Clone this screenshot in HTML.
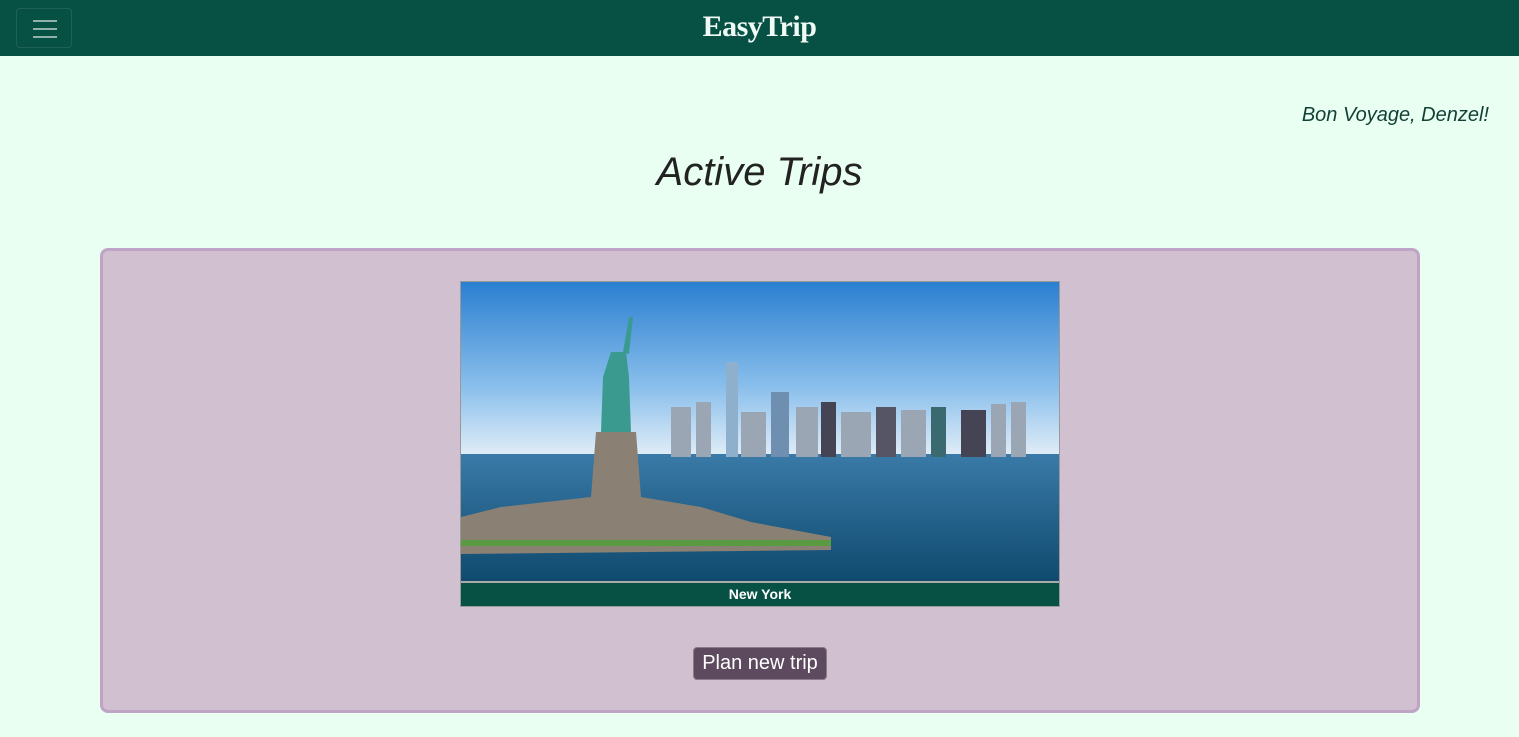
<!DOCTYPE html>
<html><head><meta charset="utf-8"><style>
*{box-sizing:border-box;margin:0;padding:0}
body{width:1519px;height:737px;background:#e8fff2;font-family:"Liberation Sans",sans-serif;position:relative;overflow:hidden}
.nav{position:absolute;left:0;top:0;width:1519px;height:56px;background:#075044}
.tog{position:absolute;left:16px;top:8px;width:56px;height:40px;border:1px solid rgba(255,255,255,.1);border-radius:4px}
.tog i{position:absolute;left:16px;width:24px;height:2px;background:#8fb3ab}
.brand{position:absolute;left:0;width:1519px;top:10px;text-align:center;color:#f0fbf6;font-family:"Liberation Serif",serif;font-weight:bold;font-size:30px;letter-spacing:-0.5px}
.hi{position:absolute;right:30px;top:104px;font-style:italic;font-size:20px;color:#123f36}
h1{position:absolute;left:0;width:1519px;top:150px;text-align:center;font-weight:normal;font-style:italic;font-size:40px;color:#222}
.card{position:absolute;left:100px;top:248px;width:1320px;height:465px;background:#d0c0d0;border:3px solid #c0a4c6;border-radius:8px}
.img{position:absolute;left:357px;top:30px;width:600px;height:326px;border:1px solid #999;background:#fff}
.cap{position:absolute;left:0;bottom:0;width:598px;height:25px;background:#075044;color:#fff;font-weight:bold;font-size:14px;text-align:center;line-height:23px;border-top:2px solid #aaa}
.btn{position:absolute;left:590px;top:396px;width:134px;height:33px;background:#5d4a5e;color:#fff;font-size:20px;text-align:center;line-height:31px;border-radius:4px;border:1px solid #8a7a8a}
</style></head><body>
<div class="nav"><div class="tog"><i style="top:11px"></i><i style="top:19px"></i><i style="top:27px"></i></div><div class="brand">EasyTrip</div></div>
<div class="hi">Bon Voyage, Denzel!</div>
<h1>Active Trips</h1>
<div class="card">
<div class="img">
<svg width="598" height="299" viewBox="0 0 598 299" style="display:block">
<defs><linearGradient id="s" x1="0" y1="0" x2="0" y2="1"><stop offset="0" stop-color="#2a7fd0"/><stop offset=".6" stop-color="#8cc0ec"/><stop offset="1" stop-color="#e6f0f8"/></linearGradient>
<linearGradient id="w" x1="0" y1="0" x2="0" y2="1"><stop offset="0" stop-color="#3a7aa8"/><stop offset="1" stop-color="#0f4a6e"/></linearGradient></defs>
<rect width="598" height="178" fill="url(#s)"/>
<rect y="172" width="598" height="127" fill="url(#w)"/>
<g fill="#9aa6b4"><rect x="210" y="125" width="20" height="50"/><rect x="235" y="120" width="15" height="55"/><rect x="265" y="80" width="12" height="95" fill="#8fb0cc"/><rect x="280" y="130" width="25" height="45"/><rect x="310" y="110" width="18" height="65" fill="#6f8fb0"/><rect x="335" y="125" width="22" height="50"/><rect x="360" y="120" width="15" height="55" fill="#445"/><rect x="380" y="130" width="30" height="45"/><rect x="415" y="125" width="20" height="50" fill="#556"/><rect x="440" y="128" width="25" height="47"/><rect x="470" y="125" width="15" height="50" fill="#3a6a70"/><rect x="500" y="128" width="25" height="47" fill="#445"/><rect x="530" y="122" width="15" height="53"/><rect x="550" y="120" width="15" height="55"/></g>
<path d="M0 235 L40 225 L130 215 L135 150 L175 150 L180 215 L240 225 L290 240 L370 255 L370 268 L0 272Z" fill="#8a8074"/>
<path d="M140 150 L142 95 L150 70 L165 70 L168 95 L170 150Z" fill="#3a9a90"/>
<path d="M162 70 L168 35 L172 35 L168 72Z" fill="#3a9a90"/>
<rect x="0" y="258" width="370" height="6" fill="#5a9a40"/>
</svg>
<div class="cap">New York</div>
</div>
<div class="btn">Plan new trip</div>
</div>
</body></html>
